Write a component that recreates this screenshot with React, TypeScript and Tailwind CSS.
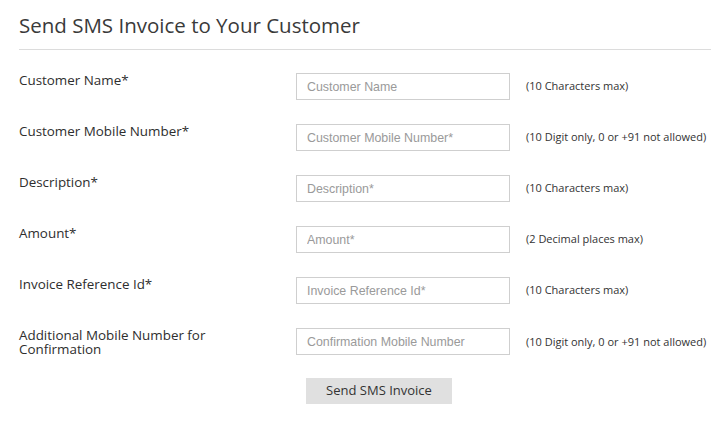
import React from 'react';

const rows = [
  { label: 'Customer Name*', placeholder: 'Customer Name', hint: '(10 Characters max)' },
  { label: 'Customer Mobile Number*', placeholder: 'Customer Mobile Number*', hint: '(10 Digit only, 0 or +91 not allowed)' },
  { label: 'Description*', placeholder: 'Description*', hint: '(10 Characters max)' },
  { label: 'Amount*', placeholder: 'Amount*', hint: '(2 Decimal places max)' },
  { label: 'Invoice Reference Id*', placeholder: 'Invoice Reference Id*', hint: '(10 Characters max)' },
  { label: 'Additional Mobile Number for Confirmation', placeholder: 'Confirmation Mobile Number', hint: '(10 Digit only, 0 or +91 not allowed)' },
];

export default function App() {
  return (
    <div className="min-h-screen bg-white pl-[19px] pt-[11px] font-['Open_Sans',sans-serif] text-[#333]">
      <h1 className="text-[20.5px] leading-[28px] text-[#3a3a3a]">Send SMS Invoice to Your Customer</h1>
      <div className="mt-[10px] h-px bg-[#dcdcdc]" />

      <form className="mt-[23px] flex flex-col gap-[24px]" onSubmit={e => e.preventDefault()}>
        {rows.map(row => (
          <div key={row.label} className="flex items-start">
            <label className="w-[277px] pr-[70px] text-[13.4px] leading-[14px] text-[#2e2e2e]">{row.label}</label>
            <input
              type="text"
              placeholder={row.placeholder}
              className="h-[27px] w-[214px] border border-[#cfcfcf] px-[10px] font-['Liberation_Sans',Arial,sans-serif] text-[12.4px] text-[#333] outline-none placeholder:text-[#9a9a9a]"
            />
            <span className="ml-[16px] self-center text-[11px] text-[#333]">{row.hint}</span>
          </div>
        ))}
        <div className="-mt-[3px] pl-[287px]">
          <button type="submit" className="h-[26px] w-[146px] bg-[#e0e0e0] text-[13px] text-[#333]">
            Send SMS Invoice
          </button>
        </div>
      </form>
    </div>
  );
}
